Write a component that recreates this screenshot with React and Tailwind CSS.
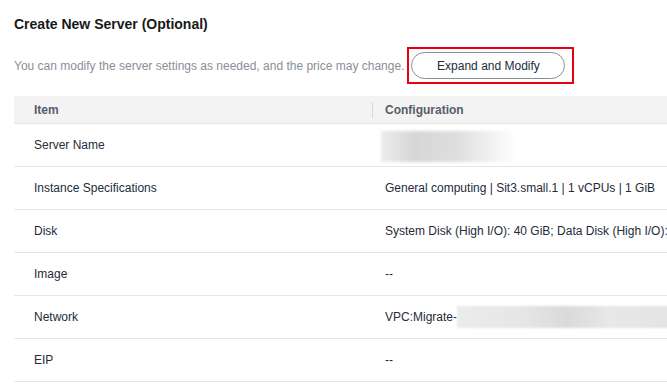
import React from 'react';

const rows = [
  { item: 'Server Name', blurName: true },
  { item: 'Instance Specifications', config: 'General computing | Sit3.small.1 | 1 vCPUs | 1 GiB' },
  { item: 'Disk', config: 'System Disk (High I/O): 40 GiB; Data Disk (High I/O): 100 GiB' },
  { item: 'Image', config: '--' },
  { item: 'Network', config: 'VPC:Migrate-', blurNet: true },
  { item: 'EIP', config: '--' },
];

function App() {
  return (
    <div className="w-[667px] h-[385px] overflow-hidden bg-white font-['Liberation_Sans',Arial,sans-serif] text-[12px] text-[#252b3a]">
      <div className="pl-[14px] pt-[14px]">
        <h2 className="text-[14px] leading-[20px] font-bold text-[#191919]">Create New Server (Optional)</h2>

        <div className="mt-[13px] flex items-center h-[37px]">
          <p className="text-[#8a8e99] whitespace-nowrap">
            You can modify the server settings as needed, and the price may change.
          </p>
          <div className="ml-[3px] border-2 border-[#e60012] pl-[2px] pr-[7px] py-[3px]">
            <button className="w-[154px] h-[27px] rounded-full border border-[#8a8e99] bg-white text-[12px] text-[#252b3a]">
              Expand and Modify
            </button>
          </div>
        </div>

        {/* Table */}
        <div className="mt-[12px] w-[720px]">
          <div className="flex h-[28px] items-center bg-[#f3f3f3] font-bold text-[#575d6c] border-b border-[#e6e6e6]">
            <div className="w-[358px] pl-[20px]">Item</div>
            <div className="h-[16px] w-px bg-[#d7d7d7]" />
            <div className="pl-[12px]">Configuration</div>
          </div>
          {rows.map((row, i) => (
            <div key={i} className="flex h-[43px] items-center border-b border-[#e6e6e6] whitespace-nowrap">
              <div className="w-[358px] pl-[20px]">{row.item}</div>
              <div className="w-px" />
              <div className="flex items-center">
                {row.blurName ? (
                  <div className="ml-[8px] mt-[2px] h-[31px] w-[136px] bg-[linear-gradient(90deg,#ececec,#d6d6d6_25%,#dedede_55%,#f0f0f0_80%,#ffffff)] blur-[1.5px]" />
                ) : (
                  <span className="pl-[12px]">{row.config}</span>
                )}
                {row.blurNet && (
                  <div className="h-[22px] w-[220px] bg-[linear-gradient(90deg,#ececec,#e6e6e6_30%,#dadada_50%,#e8e8e8_70%,#e3e3e3)] blur-[1px]" />
                )}
              </div>
            </div>
          ))}
        </div>
      </div>
    </div>
  );
}

export default App;
